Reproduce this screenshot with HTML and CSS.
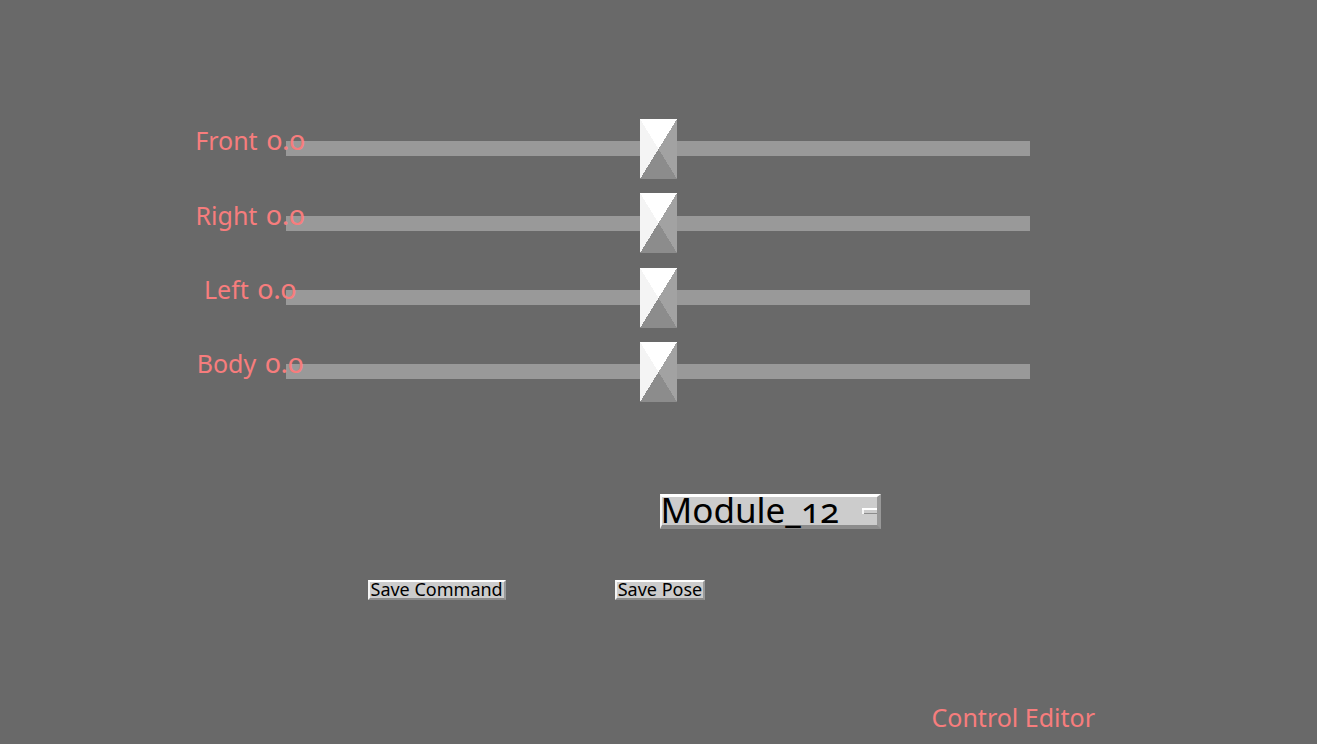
FILE: index.html
```html
<!DOCTYPE html>
<html lang="en">
<head>
<meta charset="utf-8">
<title>Control Editor</title>
<link rel="stylesheet" href="styles.css">
</head>
<body>
<main class="editor">
  <form class="controls">
    <div class="row">
      <label class="row-label" for="front">Front <span class="value">0.0</span></label>
      <input class="slider" id="front" type="range" min="-1" max="1" step="0.1" value="0">
    </div>
    <div class="row">
      <label class="row-label" for="right">Right <span class="value">0.0</span></label>
      <input class="slider" id="right" type="range" min="-1" max="1" step="0.1" value="0">
    </div>
    <div class="row">
      <label class="row-label" for="left">Left <span class="value">0.0</span></label>
      <input class="slider" id="left" type="range" min="-1" max="1" step="0.1" value="0">
    </div>
    <div class="row">
      <label class="row-label" for="body">Body <span class="value">0.0</span></label>
      <input class="slider" id="body" type="range" min="-1" max="1" step="0.1" value="0">
    </div>
    <div class="module-row">
      <div class="module-frame">
        <select class="module" aria-label="Module">
          <option>Module_12</option>
        </select>
      </div>
    </div>
    <div class="actions">
      <button class="button" type="button">Save Command</button>
      <button class="button" type="button">Save Pose</button>
    </div>
  </form>
  <h1 class="title">Control Editor</h1>
</main>
</body>
</html>
```
FILE: styles.css
```css
* {
  box-sizing: border-box;
}

body {
  margin: 0;
  background: #696969;
  color: #f77d7d;
  font-family: "Noto Sans", sans-serif;
  font-variant-numeric: oldstyle-nums;
}

.editor {
  display: flex;
  flex-direction: column;
  justify-content: space-between;
  min-height: 100vh;
  padding-top: 15vh;
}

.row {
  display: grid;
  grid-template-columns: 1fr 744px 1fr;
  align-items: center;
  height: 10vh;
  padding-right: 1px;
}

.row-label {
  display: flex;
  gap: 9px;
  align-items: baseline;
  justify-content: center;
  justify-self: end;
  z-index: 1;
  width: 72px;
  padding-bottom: 18px;
  font-size: 25px;
  line-height: 32px;
  white-space: nowrap;
}

.value {
  font-size: 28px;
}

.slider {
  appearance: none;
  width: 100%;
  height: 60px;
  margin: 0;
  background: linear-gradient(#999, #999) center / 100% 15px no-repeat;
}

.slider::-webkit-slider-thumb {
  appearance: none;
  width: 37px;
  height: 60px;
  background: conic-gradient(#fff 0 31.7deg, #a2a2a2 0 148.3deg, #8c8c8c 0 211.7deg, #f4f4f4 0 328.3deg, #fff 0);
}

.module-row {
  display: flex;
  margin-top: 85px;
  padding-left: calc(50% + 1px);
}

.module-frame {
  width: 221px;
  height: 35px;
  border: solid;
  border-width: 3px 4px 4px 2px;
  border-color: #fff #999 #8c8c8c #f4f4f4;
  background: #ccc;
}

.module {
  appearance: none;
  display: block;
  width: 217px;
  height: 40px;
  margin: -7px 0 0 -2px;
  padding: 0 0 0 1px;
  border: 0;
  border-radius: 0;
  background:
    linear-gradient(#fff, #fff) right 18px / 15px 2px no-repeat,
    linear-gradient(#f4f4f4, #f4f4f4) right 13px top 18px / 2px 6px no-repeat,
    linear-gradient(#8c8c8c, #8c8c8c) right 23px / 13px 1px no-repeat;
  color: #000;
  font: 35px/40px "Noto Sans", sans-serif;
  font-variant-numeric: oldstyle-nums;
}

.actions {
  display: flex;
  gap: 109px;
  margin-top: 51px;
  padding-left: calc(50% - 291px);
}

.button {
  height: 20px;
  padding: 0 1px 2px;
  border: 2px solid;
  border-color: #fff #999 #8c8c8c #f4f4f4;
  background: #ccc;
  color: #000;
  font: 18px/14px "Noto Sans", sans-serif;
}

.title {
  margin: 0;
  padding: 0 222px 11px 0;
  font-size: 25px;
  font-weight: 400;
  line-height: 32px;
  text-align: right;
}
```
